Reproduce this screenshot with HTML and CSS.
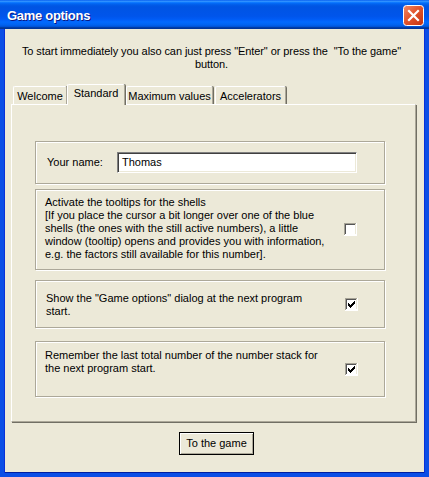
FILE: index.html
```html
<!DOCTYPE html>
<html>
<head>
<meta charset="utf-8">
<title>Game options</title>
<link rel="stylesheet" href="styles.css">
</head>
<body>
<div class="window">
  <div class="titlebar">
    <span class="title">Game options</span>
    <span class="close" aria-label="Close">
      <svg width="21" height="21" viewBox="0 0 21 21">
        <defs>
          <linearGradient id="cg" x1="0" y1="0" x2="1" y2="1">
            <stop offset="0" stop-color="#F08A68"/>
            <stop offset="0.45" stop-color="#E2552E"/>
            <stop offset="1" stop-color="#C3310F"/>
          </linearGradient>
        </defs>
        <rect x="0.5" y="0.5" width="20" height="20" rx="3" fill="url(#cg)" stroke="#fff"/>
        <path d="M6 6 L15 15 M15 6 L6 15" stroke="#fff" stroke-width="2.2" stroke-linecap="square"/>
      </svg>
    </span>
  </div>
  <div class="frame">
    <p class="intro">To start immediately you also can just press "Enter" or press the&nbsp; "To the game"<br>button.</p>
    <div class="tabs">
      <div class="tab tab-welcome">Welcome</div>
      <div class="tab tab-active">Standard</div>
      <div class="tab tab-max">Maximum values</div>
      <div class="tab tab-acc">Accelerators</div>
    </div>
    <div class="panel">
      <div class="group group-name">
        <span class="label">Your name:</span>
        <span class="input">Thomas</span>
      </div>
      <div class="group group-tips">
        <div class="group-text text-tips">Activate the tooltips for the shells<br>[If you place the cursor a bit longer over one of the blue<br>shells (the ones with the still active numbers), a little<br>window (tooltip) opens and provides you with information,<br>e.g. the factors still available for this number].</div>
        <span class="check check-tips"><svg width="13" height="13" viewBox="0 0 13 13" shape-rendering="crispEdges"><rect width="13" height="13" fill="#fff"/><path d="M0 0h12v1H1v11H0z" fill="#A6A396"/><path d="M1 1h10v1H2v9H1z" fill="#555"/><path d="M1 11h11V1h-1v10H1z" fill="#ECE9D8"/></svg></span>
      </div>
      <div class="group group-show">
        <div class="group-text text-show">Show the "Game options" dialog at the next program<br>start.</div>
        <span class="check"><svg width="13" height="13" viewBox="0 0 13 13" shape-rendering="crispEdges"><rect width="13" height="13" fill="#fff"/><path d="M0 0h12v1H1v11H0z" fill="#A6A396"/><path d="M1 1h10v1H2v9H1z" fill="#555"/><path d="M1 11h11V1h-1v10H1z" fill="#ECE9D8"/><path d="M9 3h1v1H9zM8 4h2v1H8zM3 5h1v1H3zM7 5h3v1H7zM3 6h2v1H3zM6 6h3v1H6zM3 7h5v1H3zM4 8h3v1H4zM5 9h1v1H5z" fill="#000"/></svg></span>
      </div>
      <div class="group group-remember">
        <div class="group-text text-remember">Remember the last total number of the number stack for<br>the next program start.</div>
        <span class="check"><svg width="13" height="13" viewBox="0 0 13 13" shape-rendering="crispEdges"><rect width="13" height="13" fill="#fff"/><path d="M0 0h12v1H1v11H0z" fill="#A6A396"/><path d="M1 1h10v1H2v9H1z" fill="#555"/><path d="M1 11h11V1h-1v10H1z" fill="#ECE9D8"/><path d="M9 3h1v1H9zM8 4h2v1H8zM3 5h1v1H3zM7 5h3v1H7zM3 6h2v1H3zM6 6h3v1H6zM3 7h5v1H3zM4 8h3v1H4zM5 9h1v1H5z" fill="#000"/></svg></span>
      </div>
    </div>
    <div class="actions">
      <button class="btn">To the game</button>
    </div>
  </div>
</div>
</body>
</html>
```

FILE: styles.css
```css
* { box-sizing: border-box; }

html, body {
  margin: 0;
  padding: 0;
  background: #0B4EE6;
}

body {
  font-family: "Liberation Sans", Arial, sans-serif;
  font-size: 11px;
  line-height: 13px;
  color: #000;
}

.window {
  width: 429px;
  height: 477px;
  display: flex;
  flex-direction: column;
}

.titlebar {
  height: 29px;
  flex: none;
  display: flex;
  align-items: center;
  justify-content: space-between;
  padding: 0 5px 0 7px;
  background: linear-gradient(to bottom,
    #0058EE 0%, #3593FF 4%, #288EFF 6%, #127DFF 8%, #036FFC 10%,
    #0262EE 14%, #0057E5 20%, #0054E3 24%, #0055EB 56%, #005BF5 66%,
    #026AFE 76%, #0062EF 86%, #0052D6 92%, #0040AB 94%, #003092 100%);
}

.title {
  color: #fff;
  font-family: "Liberation Sans", Arial, sans-serif;
  font-weight: bold;
  font-size: 13px;
  letter-spacing: -0.3px;
  text-shadow: 1px 1px 0 #0A1883;
  padding-top: 1px;
}

.close {
  width: 21px;
  height: 21px;
  display: block;
  margin-top: 2px;
}
.close svg { display: block; }

.frame {
  flex: 1;
  display: flex;
  flex-direction: column;
  background: #ECE9D8;
  border-left: 4px solid #0B4EE6;
  border-right: 4px solid #0B4EE6;
  border-bottom: 4px solid #0B4EE6;
  box-shadow: inset 1px 0 0 #0831D9, inset -1px 0 0 #0831D9, inset 0 -1px 0 #001EA0;
}

.intro {
  margin: 0;
  padding-top: 16px;
  text-align: center;
  height: 42px;
  padding-right: 6px;
  letter-spacing: -0.08px;
}

.tabs {
  display: flex;
  align-items: flex-end;
  height: 20px;
  margin: 13px 0 0 9px;
  position: relative;
  z-index: 1;
}

.tab {
  height: 18px;
  text-align: center;
  padding-top: 3px;
  background: #ECE9D8;
  border-top: 1px solid #fff;
  border-left: 1px solid #fff;
  border-right: 1px solid #ACA899;
  box-shadow: 1px 0 0 #716F64;
  border-radius: 2px 2px 0 0;
}

.tab-welcome { width: 54px; }
.tab-active {
  width: 58px;
  height: 21px;
  margin-bottom: -1px;
  padding-top: 2px;
  margin-left: 0;
}
.tab-max { width: 87px; margin-left: 1px; }
.tab-acc { width: 71px; margin-left: 2px; }

.panel {
  height: 318px;
  margin: 0 9px 0 7px;
  border-top: 1px solid #fff;
  border-left: 1px solid #fff;
  border-right: 1px solid #ACA899;
  border-bottom: 1px solid #ACA899;
  box-shadow: 1px 1px 0 #716F64;
  display: flex;
  flex-direction: column;
  padding-left: 23px;
}

.group {
  width: 350px;
  display: flex;
  align-items: center;
  border: 1px solid #ACA899;
  box-shadow: 1px 1px 0 #fff, inset 1px 1px 0 #fff;
}

.group-name { height: 43px; margin-top: 36px; padding-left: 11px; }
.group-tips { height: 81px; margin-top: 5px; }
.group-show { height: 48px; margin-top: 10px; }
.group-remember { height: 56px; margin-top: 13px; }

.label { width: 70px; }

.input {
  width: 240px;
  height: 21px;
  background: #fff;
  padding: 3px 0 0 4px;
  border-top: 1px solid #808080;
  border-left: 1px solid #808080;
  border-right: 1px solid #fff;
  border-bottom: 1px solid #fff;
  box-shadow: inset 1px 1px 0 #404040, inset -1px -1px 0 #ECE9D8;
}

.group-text {
  align-self: flex-start;
  padding-left: 9px;
  white-space: nowrap;
}
.text-tips { padding-top: 6px; }
.text-show { padding-top: 11px; padding-left: 10px; }
.text-remember { padding-top: 7px; }

.check {
  margin-left: auto;
  margin-right: 26px;
  width: 13px;
  height: 13px;
}
.check svg { display: block; }
.check-tips { margin-right: 27px; }

.actions {
  display: flex;
  justify-content: center;
  padding-left: 4px;
  margin-top: 10px;
}

.btn {
  width: 75px;
  height: 23px;
  padding: 0;
  font: inherit;
  color: #000;
  background: #ECE9D8;
  border: 1px solid #000;
  box-shadow: inset 1px 1px 0 #fff, inset -1px -1px 0 #ACA899;
}
```
